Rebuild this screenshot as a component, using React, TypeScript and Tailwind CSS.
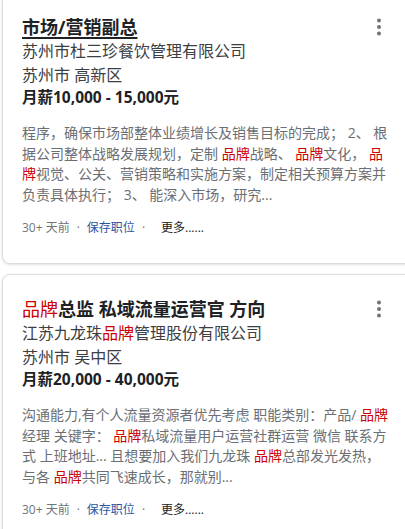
import React from "react";

const Hl = ({ children }: { children: React.ReactNode }) => (
  <span className="text-[#cc0000]">{children}</span>
);

const Kebab = () => (
  <button className="w-5 h-6 flex items-center justify-center shrink-0" aria-label="更多选项">
    <svg width="4" height="18" viewBox="0 0 4 18">
      <circle cx="2" cy="2.5" r="2" fill="#70757a" />
      <circle cx="2" cy="9" r="2" fill="#70757a" />
      <circle cx="2" cy="15.5" r="2" fill="#70757a" />
    </svg>
  </button>
);

const Footer = () => (
  <div className="flex items-center text-[12px] leading-5 mt-[13px]">
    <span className="text-[#70757a]">30+ 天前</span>
    <span className="text-[#70757a] px-[7px]">·</span>
    <span className="text-[#2b56a4]">保存职位</span>
    <span className="text-[#70757a] px-[7px]">·</span>
    <span className="text-[#202124] pl-[9px]">更多......</span>
  </div>
);

type CardProps = {
  title: React.ReactNode;
  company: React.ReactNode;
  location: string;
  salary: string;
  desc: React.ReactNode;
  extra?: string;
};

const Card = ({ title, company, location, salary, desc, extra = "" }: CardProps) => (
  <div
    className={`w-[440px] ml-[2px] bg-white border border-[#dadce0] rounded-lg shadow-[0_1px_3px_rgba(0,0,0,0.12)] pl-[19px] pt-[22px] ${extra}`}
  >
    <div className="w-[366px]">
      <div className="flex items-start justify-between">
        <div className="text-[18px] leading-6 font-bold text-[#202124]">{title}</div>
        <div className="-mr-[1px]">
          <Kebab />
        </div>
      </div>
      <div className="text-[16px] leading-6 text-[#3c4043]">{company}</div>
      <div className="text-[16px] leading-6 text-[#3c4043]">{location}</div>
      <div className="text-[15.5px] leading-[21px] font-bold text-[#202124]">{salary}</div>
      <div className="w-[380px] text-[14px] leading-[20.5px] text-[#6b6f74] mt-[15px] whitespace-nowrap">
        {desc}
      </div>
      <Footer />
    </div>
  </div>
);

export default function App() {
  return (
    <div className="w-[405px] h-[529px] overflow-hidden bg-white font-['Open_Sans','Noto_Sans_CJK_SC',sans-serif]">
      <div className="-mt-2 flex flex-col gap-[10px]">
        <Card
          extra="pb-[25px]"
          title={<span className="underline decoration-2 underline-offset-[3px]">市场/营销副总</span>}
          company="苏州市杜三珍餐饮管理有限公司"
          location="苏州市 高新区"
          salary="月薪10,000 - 15,000元"
          desc={
            <>
              程序，确保市场部整体业绩增长及销售目标的完成； 2、 根
              <br />
              据公司整体战略发展规划，定制 <Hl>品牌</Hl>战略、 <Hl>品牌</Hl>文化， <Hl>品</Hl>
              <br />
              <Hl>牌</Hl>视觉、公关、营销策略和实施方案，制定相关预算方案并
              <br />
              负责具体执行； 3、 能深入市场，研究...
            </>
          }
        />
        <Card
          extra="pb-[40px]"
          title={
            <>
              <span className="font-normal text-[#cc0000]">品牌</span>总监 私域流量运营官 方向
            </>
          }
          company={
            <>
              江苏九龙珠<Hl>品牌</Hl>管理股份有限公司
            </>
          }
          location="苏州市 吴中区"
          salary="月薪20,000 - 40,000元"
          desc={
            <>
              沟通能力,有个人流量资源者优先考虑 职能类别：产品/ <Hl>品牌</Hl>
              <br />
              经理 关键字： <Hl>品牌</Hl>私域流量用户运营社群运营 微信 联系方
              <br />
              式 上班地址... 且想要加入我们九龙珠 <Hl>品牌</Hl>总部发光发热，
              <br />
              与各 <Hl>品牌</Hl>共同飞速成长，那就别...
            </>
          }
        />
      </div>
    </div>
  );
}
